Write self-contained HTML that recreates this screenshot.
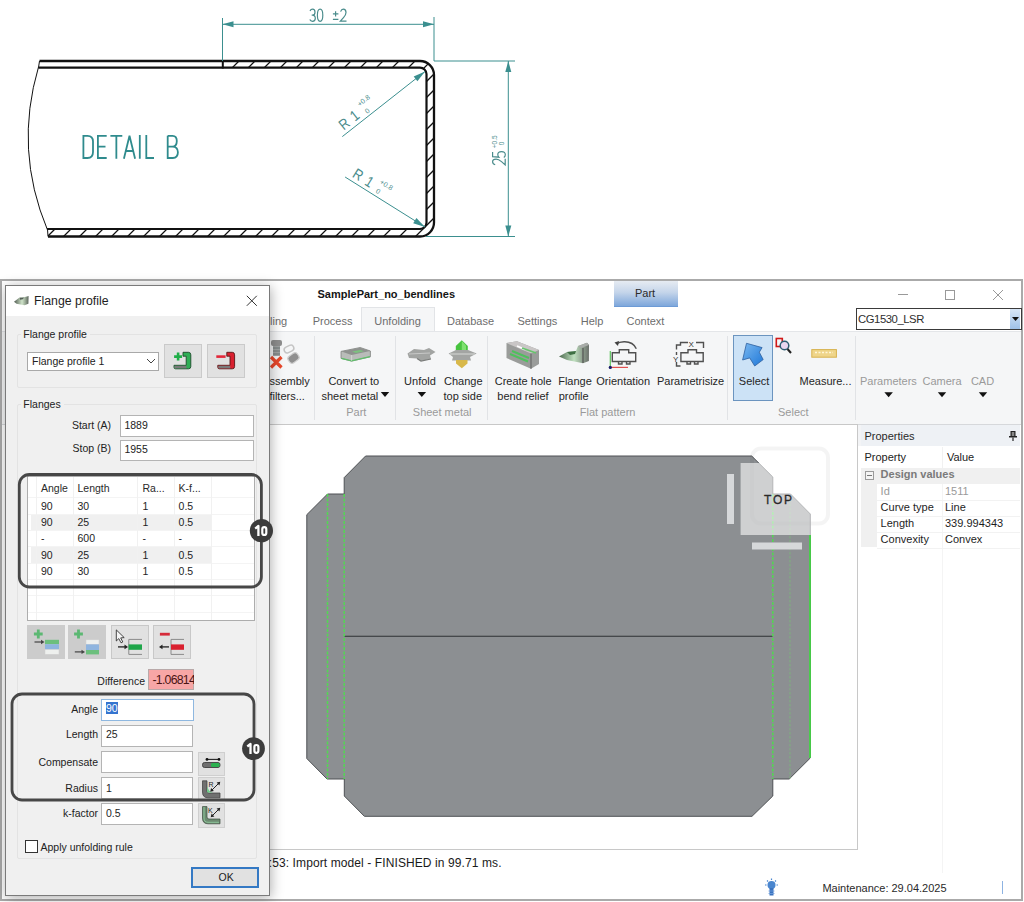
<!DOCTYPE html>
<html><head><meta charset="utf-8">
<style>
*{margin:0;padding:0;box-sizing:border-box}
html,body{width:1024px;height:902px;overflow:hidden;background:#fff;font-family:"Liberation Sans",sans-serif;color:#222}
.a{position:absolute}
.t{position:absolute;white-space:nowrap;line-height:1}
</style></head><body>

<!-- ============ TECH DRAWING ============ -->
<svg class="a" style="left:0;top:0" width="1024" height="270" viewBox="0 0 1024 270" id="draw">
<defs><clipPath id="hc"><path d="M222.5 61 H420 A14 14 0 0 1 434 75 V222 A14 14 0 0 1 420 236.5 H48 L47 229 H420 A6.5 6.5 0 0 0 426.5 222.5 V74 A6.5 6.5 0 0 0 420 67.6 H222.5 Z"/></clipPath></defs>
<g clip-path="url(#hc)"><path d="M-440 260 L-180 0 M-424 260 L-164 0 M-408 260 L-148 0 M-392 260 L-132 0 M-376 260 L-116 0 M-360 260 L-100 0 M-344 260 L-84 0 M-328 260 L-68 0 M-312 260 L-52 0 M-296 260 L-36 0 M-280 260 L-20 0 M-264 260 L-4 0 M-248 260 L12 0 M-232 260 L28 0 M-216 260 L44 0 M-200 260 L60 0 M-184 260 L76 0 M-168 260 L92 0 M-152 260 L108 0 M-136 260 L124 0 M-120 260 L140 0 M-104 260 L156 0 M-88 260 L172 0 M-72 260 L188 0 M-56 260 L204 0 M-40 260 L220 0 M-24 260 L236 0 M-8 260 L252 0 M8 260 L268 0 M24 260 L284 0 M40 260 L300 0 M56 260 L316 0 M72 260 L332 0 M88 260 L348 0 M104 260 L364 0 M120 260 L380 0 M136 260 L396 0 M152 260 L412 0 M168 260 L428 0 M184 260 L444 0 M200 260 L460 0 M216 260 L476 0 M232 260 L492 0 M248 260 L508 0 M264 260 L524 0 M280 260 L540 0 M296 260 L556 0 M312 260 L572 0 M328 260 L588 0 M344 260 L604 0 M360 260 L620 0 M376 260 L636 0 M392 260 L652 0 M408 260 L668 0 M424 260 L684 0 M440 260 L700 0 M456 260 L716 0 M472 260 L732 0 M488 260 L748 0 M504 260 L764 0 M520 260 L780 0 M536 260 L796 0 M552 260 L812 0 M568 260 L828 0 M584 260 L844 0 M600 260 L860 0 M616 260 L876 0 M632 260 L892 0 M648 260 L908 0 M664 260 L924 0 M680 260 L940 0 M696 260 L956 0 M712 260 L972 0 M728 260 L988 0 M744 260 L1004 0 M760 260 L1020 0 M776 260 L1036 0 M792 260 L1052 0 M808 260 L1068 0 M824 260 L1084 0 M840 260 L1100 0 M856 260 L1116 0 M872 260 L1132 0 M888 260 L1148 0 M904 260 L1164 0 M920 260 L1180 0 M936 260 L1196 0 M952 260 L1212 0 M968 260 L1228 0 M984 260 L1244 0" stroke="#111" stroke-width="1.3" fill="none"/></g>
<path d="M39.5 61 H420 A14 14 0 0 1 434 75 V222 A14 14 0 0 1 420 236.5 H48" stroke="#111" fill="none" stroke-width="2.3"/>
<path d="M38.5 67.6 H420 A6.5 6.5 0 0 1 426.5 74 V222.5 A6.5 6.5 0 0 1 420 229 H47" stroke="#111" fill="none" stroke-width="2.2"/>
<path d="M222.8 61 V68.5" stroke="#111" fill="none" stroke-width="2"/>
<path d="M38.5 67 Q14 150 47.5 230" stroke="#111" fill="none" stroke-width="1"/>
<path d="M39.5 61 L38.5 67.6 M47.5 229 L48 236.5" stroke="#111" fill="none" stroke-width="1"/>
<path d="M222.5 18 V61 M434 17 V61 M222.5 24.3 H434 M434 61 H515 M426 236.5 H515 M508.3 61 V236.5" stroke="#3b8f8f" stroke-width="1" fill="none"/>
<path d="M222.5 24.3 L233.5 21.3 L233.5 27.3 Z" fill="#3b8f8f"/>
<path d="M434.0 24.3 L423.0 27.3 L423.0 21.3 Z" fill="#3b8f8f"/>
<path d="M508.3 61.0 L511.3 72.0 L505.3 72.0 Z" fill="#3b8f8f"/>
<path d="M508.3 236.5 L505.3 225.5 L511.3 225.5 Z" fill="#3b8f8f"/>
<path d="M342.3 136.6 L425 71.5 M345.1 177 L425 227" stroke="#3b8f8f" stroke-width="1" fill="none"/>
<path d="M425.0 71.5 L417.4 81.3 L413.7 76.6 Z" fill="#3b8f8f"/>
<path d="M425.0 227.0 L413.2 223.2 L416.4 218.1 Z" fill="#3b8f8f"/>
<path d="M83.4 135.8 V158 H87.5 Q93 158 93 152 V141.5 Q93 135.8 87.5 135.8 Z M106.7 135.8 H97.9 V158 H106.7 M97.9 146.7 H105.5 M110.4 135.8 H122.3 M116.35 135.8 V158.8 M123.9 158.8 L129.5 135.8 L135.1 158.8 M125.7 151 H133.3 M139.8 135 V158.8 M146.3 135 V158 H154 M167.7 135.8 H172.6 Q176.8 135.8 176.8 141 Q176.8 146.6 172.4 146.6 H167.7 M172.4 146.6 Q177.9 146.6 177.9 152.3 Q177.9 158 172.8 158 H167.7 V135.8" stroke="#2f8b8d" stroke-width="1.8" fill="none" stroke-linejoin="miter"/>
<path d="M310 11 Q310.8 9.2 312.6 9.2 Q315 9.2 315 12.2 Q315 15.1 312.4 15.1 H311.7 M312.4 15.1 Q315.3 15.1 315.3 18.3 Q315.3 21.3 312.5 21.3 Q310.6 21.3 309.8 19.5 M320.1 9.2 Q322.8 9.2 322.8 15.25 Q322.8 21.3 320.1 21.3 Q317.4 21.3 317.4 15.25 Q317.4 9.2 320.1 9.2 Z M335.6 11.2 V16.6 M332.9 13.9 H338.4 M332.9 19.3 H338.4 M340.6 11.6 Q341.4 9.2 343.3 9.2 Q346 9.2 346 12.4 Q346 14.8 343.5 17.6 L340.3 21.2 H346.5" stroke="#4a8c8c" stroke-width="1.2" fill="none"/>
<g transform="translate(505.4,165.2) rotate(-90)"><path d="M0.5 -10.2 Q1.3 -12.8 3.4 -12.8 Q6.1 -12.8 6.1 -9.3 Q6.1 -6.8 3.6 -3.9 L0.3 -0.2 H6.5 M13.3 -12.8 H8.5 L8 -6.6 Q9.1 -7.6 10.6 -7.6 Q13.6 -7.6 13.6 -3.9 Q13.6 -0.1 10.4 -0.1 Q8.5 -0.1 7.7 -1.6" stroke="#4a8c8c" stroke-width="1.2" fill="none"/><text x="17" y="-8.5" font-size="6.5" fill="#4a8c8c" font-family="Liberation Sans">+0.5</text><text x="20" y="-1.2" font-size="6.5" fill="#4a8c8c" font-family="Liberation Sans">0</text></g>
<g transform="translate(343.7,130.8) rotate(-38.4)" fill="#4a8c8c" font-family="Liberation Sans"><g transform="scale(0.85,1)"><text x="0" y="0" font-size="15">R</text><text x="17" y="0" font-size="15">1</text></g><text x="27.5" y="-9" font-size="7">+0.8</text><text x="29" y="1.5" font-size="7">0</text></g>
<g transform="translate(351.6,176.6) rotate(32)" fill="#4a8c8c" font-family="Liberation Sans"><g transform="scale(0.85,1)"><text x="0" y="0" font-size="15">R</text><text x="17" y="0" font-size="15">1</text></g><text x="27" y="-9" font-size="7">+0.8</text><text x="28.3" y="0.8" font-size="7">0</text></g>
</svg>

<!-- ============ APP WINDOW ============ -->
<div class="a" id="app" style="left:0;top:279px;width:1023px;height:622px;border:2px solid #aaaaaa;background:#fff"></div>
<!-- title -->
<div class="t" style="left:317.5px;top:289px;font-size:11px;font-weight:bold;color:#151515">SamplePart_no_bendlines</div>
<div class="a" style="left:614px;top:281px;width:64px;height:26px;background:linear-gradient(#e6ebf2,#c5d5ea 45%,#7ea7db);border-bottom:1px solid #6d9bd6"></div>
<div class="t" style="left:635px;top:288px;font-size:11px;color:#2a2a2a">Part</div>
<!-- window controls -->
<div class="a" style="left:898px;top:294px;width:10px;height:1px;background:#999"></div>
<div class="a" style="left:945px;top:290px;width:10px;height:10px;border:1px solid #999"></div>
<svg class="a" style="left:992px;top:289px" width="12" height="12"><path d="M1 1 L11 11 M11 1 L1 11" stroke="#999" stroke-width="1"/></svg>
<!-- combo -->
<div class="a" style="left:856px;top:308px;width:165.5px;height:21.5px;border:1px solid #3a3a3a;background:#fff"></div>
<div class="t" style="left:858px;top:313.5px;font-size:11.3px;color:#2e2e2e;letter-spacing:-0.45px">CG1530_LSR</div>
<div class="a" style="left:1009.5px;top:309px;width:10.5px;height:19.5px;background:linear-gradient(#d8e6f6,#9fc1e8)"></div>
<svg class="a" style="left:1012px;top:317px" width="7" height="5"><path d="M0 0 H7 L3.5 4 Z" fill="#111"/></svg>
<!-- tabs -->
<div class="a" style="left:361px;top:307px;width:74px;height:25px;background:#f5f6f7;border:1px solid #e2e4e7;border-bottom:none"></div>
<div class="t" style="left:270px;top:316px;font-size:11px;color:#6d6d6d">ling</div>
<div class="t" style="left:312.7px;top:316px;font-size:11px;color:#6d6d6d">Process</div>
<div class="t" style="left:374.3px;top:316px;font-size:11px;color:#6d6d6d">Unfolding</div>
<div class="t" style="left:447px;top:316px;font-size:11px;color:#6d6d6d">Database</div>
<div class="t" style="left:517.5px;top:316px;font-size:11px;color:#6d6d6d">Settings</div>
<div class="t" style="left:580.8px;top:316px;font-size:11px;color:#6d6d6d">Help</div>
<div class="t" style="left:626.5px;top:316px;font-size:11px;color:#6d6d6d">Context</div>
<!-- ribbon -->
<div class="a" style="left:2px;top:331px;width:1019px;height:94px;background:#f5f6f7;border-top:1px solid #e4e6e9;border-bottom:1px solid #d6d8db"></div>
<div class="a" style="left:314px;top:336px;width:1px;height:84px;background:#e1e3e6"></div>
<div class="a" style="left:395px;top:336px;width:1px;height:84px;background:#e1e3e6"></div>
<div class="a" style="left:487px;top:336px;width:1px;height:84px;background:#e1e3e6"></div>
<div class="a" style="left:727px;top:336px;width:1px;height:84px;background:#e1e3e6"></div>
<div class="a" style="left:855px;top:336px;width:1px;height:84px;background:#e1e3e6"></div>
<div class="a" style="left:732.7px;top:335.3px;width:40.2px;height:66.2px;background:#cce2f6;border:1px solid #6b94bf"></div>
<div class="t" style="left:269.4px;top:375.9px;font-size:11px;color:#262626;">ssembly</div>
<div class="t" style="left:269.4px;top:391.1px;font-size:11px;color:#262626;">filters...</div>
<div class="t" style="left:328.4px;top:375.9px;font-size:11px;color:#262626;">Convert to</div>
<div class="t" style="left:321.4px;top:391.1px;font-size:11px;color:#262626;">sheet metal</div>
<div class="t" style="left:346.2px;top:407.0px;font-size:11px;color:#9a9a9a;">Part</div>
<div class="t" style="left:404.1px;top:375.9px;font-size:11px;color:#262626;">Unfold</div>
<div class="t" style="left:444.0px;top:375.9px;font-size:11px;color:#262626;">Change</div>
<div class="t" style="left:443.5px;top:391.1px;font-size:11px;color:#262626;">top side</div>
<div class="t" style="left:412.8px;top:407.0px;font-size:11px;color:#9a9a9a;">Sheet metal</div>
<div class="t" style="left:494.7px;top:375.9px;font-size:11px;color:#262626;">Create hole</div>
<div class="t" style="left:497.3px;top:391.1px;font-size:11px;color:#262626;">bend relief</div>
<div class="t" style="left:558.2px;top:375.9px;font-size:11px;color:#262626;">Flange</div>
<div class="t" style="left:558.7px;top:391.1px;font-size:11px;color:#262626;">profile</div>
<div class="t" style="left:596.3px;top:375.9px;font-size:11px;color:#262626;">Orientation</div>
<div class="t" style="left:657.0px;top:375.9px;font-size:11px;color:#262626;">Parametrisize</div>
<div class="t" style="left:579.8px;top:407.0px;font-size:11px;color:#9a9a9a;">Flat pattern</div>
<div class="t" style="left:738.8px;top:375.9px;font-size:11px;color:#262626;">Select</div>
<div class="t" style="left:799.5px;top:375.9px;font-size:11px;color:#262626;">Measure...</div>
<div class="t" style="left:778.0px;top:407.0px;font-size:11px;color:#9a9a9a;">Select</div>
<div class="t" style="left:860.0px;top:375.9px;font-size:11px;color:#9a9a9a;">Parameters</div>
<div class="t" style="left:922.5px;top:375.9px;font-size:11px;color:#9a9a9a;">Camera</div>
<div class="t" style="left:970.9px;top:375.9px;font-size:11px;color:#9a9a9a;">CAD</div>
<svg class="a" style="left:260px;top:332px" width="764" height="92" viewBox="260 332 764 92"><defs><linearGradient id="gtray" x1="0" y1="0" x2="0" y2="1"><stop offset="0" stop-color="#c9cbc9"/><stop offset="0.5" stop-color="#9a9d9a"/><stop offset="1" stop-color="#7b7e7b"/></linearGradient><linearGradient id="gsel" x1="0" y1="0" x2="1" y2="1"><stop offset="0" stop-color="#7ab8f0"/><stop offset="1" stop-color="#1f78d8"/></linearGradient><linearGradient id="gfl" x1="0" y1="0" x2="1" y2="0"><stop offset="0" stop-color="#4c6a4e"/><stop offset="0.5" stop-color="#bfe0bf"/><stop offset="1" stop-color="#6b706b"/></linearGradient></defs><path d="M380.8 391.9 H389.2 L385.0 396.9 Z" fill="#111"/><path d="M417.6 391.9 H426.1 L421.8 396.9 Z" fill="#111"/><path d="M884.4 392.3 H892.9 L888.6 397.3 Z" fill="#111"/><path d="M937.8 392.3 H946.2 L942.0 397.3 Z" fill="#111"/><path d="M978.8 392.3 H987.2 L983.0 397.3 Z" fill="#111"/><rect x="271" y="340" width="11" height="6" rx="2" fill="#8e8e8e"/><rect x="273" y="346" width="7" height="10" fill="#9fa3a3"/><path d="M273 348 H280 M273 351 H280 M273 354 H280" stroke="#6e7777" stroke-width="1"/><path d="M271 357 L281.5 367.5 M281.5 357 L271 367.5" stroke="#e8472a" stroke-width="3.2"/><rect x="284" y="346" width="10" height="6" rx="3" fill="none" stroke="#c4c4c4" stroke-width="1.5" transform="rotate(-25 289 349)"/><rect x="288" y="354" width="11" height="8" rx="3" fill="#8f8f8f" stroke="#d0d0d0" stroke-width="1.2" transform="rotate(-35 293.5 358)"/><path d="M341 351.4 L360.2 347.5 L370.4 351 V356.8 L351.6 361.1 L341 358.4 Z" fill="#b9bcb9" stroke="#7d807d" stroke-width="0.8" stroke-linejoin="round"/><path d="M341.5 351.6 L360.2 347.8 L370 351.1 L351.6 355 Z" fill="#8f928f"/><path d="M352 351.5 L360 350 L364 351.3 L356 353 Z" fill="#7cc27f"/><path d="M341.5 358.3 L351.6 360.8 L370 356.6" stroke="#5fbf6a" stroke-width="1.2" fill="none"/><path d="M351.6 355 V360.8" stroke="#d9dcd9" stroke-width="0.8"/><path d="M407.5 353.5 L414 349 L424 350 L429 348 L435.5 352 L430 355.5 L431 359 L421 361 L417 358.5 L409 358 Z" fill="#a2a4a2"/><path d="M409 354 L430 353" stroke="#c7c8c7" stroke-width="1.2"/><path d="M417 358.5 L421 361 L431 359" stroke="#7a7c7a" stroke-width="1.2" fill="none"/><path d="M461.8 340.2 L467.8 346 V352.5 H455.8 V346 Z" fill="#47c43f"/><path d="M461.8 341 L466 345.5 V351 H461.8 Z" fill="#7ee070"/><path d="M448.6 353.5 L456 350 L468 350 L476.7 353.5 L470 357 L471 360.4 L452 360.4 L453 357 Z" fill="#a3a5a3"/><path d="M450 354 H475" stroke="#cfd0cf" stroke-width="1.2"/><path d="M456 360 H467.5 V363.5 L461.8 368.3 L456 363.5 Z" fill="#d8b84a"/><path d="M506.5 343 L517 341.3 L539 350 V364 L531 368.7 L506.5 358 Z" fill="#9a9c9a"/><path d="M506.5 343 L517 341.3 L539 350 L531 353.5 Z" fill="#c9c6c6"/><path d="M531 353.5 V368.7" stroke="#6b6b6b" stroke-width="1.2"/><path d="M512 351 L529 358 M510 354 L528 361.5" stroke="#4fc05d" stroke-width="2"/><path d="M517 346 L525 349.5" stroke="#fff" stroke-width="1.8"/><path d="M522 348 L536 353" stroke="#66c46c" stroke-width="1.8"/><path d="M559 356.5 L567 352 L576 351 L578 346 L587 342.8 L589 345 L588.9 361 L583 363.3 L567 360 Z" fill="url(#gfl)"/><path d="M578 346 L587 342.8 L589 345 L581 348 Z" fill="#a9aca9"/><path d="M567 352 L576 351 L575 354 L570 355 Z" fill="#3f6f44"/><path d="M583 348 V363" stroke="#5e625e" stroke-width="1.5"/><g fill="none" stroke="#505050" stroke-width="1.4"><path d="M612.3 352.8 H619.3 V349.8 H628.7 V352.8 H635.7 V361.5 H612.3 Z"/><path d="M618.5 361.5 V364 H622 V361.5 M626.5 361.5 V364 H630 V361.5"/><path d="M636.3 348.7 Q633 341.5 624 341.8 Q619 342 616.5 344"/></g><path d="M614.5 342.5 L619 341 L618 346 Z" fill="#404040"/><path d="M610.3 351 V367.4" stroke="#5cc45c" stroke-width="1.2"/><path d="M610.3 367.4 H628" stroke="#e05050" stroke-width="1.2"/><circle cx="610.3" cy="367.4" r="1.6" fill="#1a1a6a"/><g fill="none" stroke="#505050" stroke-width="1.4"><path d="M680.9 352.8 H688 V349.8 H696.5 V352.8 H703.2 V361.5 H680.9 Z"/><path d="M687 361.5 V364 H690.5 V361.5 M694.5 361.5 V364 H698 V361.5"/><path d="M676.5 349.5 V345 H680.5 V342.5 H688 M696 342.5 H703.5 V348"/><path d="M676.5 352 V355 M676.5 362 V366 H680.5"/></g><text x="688.5" y="347" font-size="8" fill="#333" font-family="Liberation Sans">X</text><text x="673" y="361.5" font-size="8" fill="#333" font-family="Liberation Sans">Y</text><path d="M746.5 343.3 L762.1 347.6 L759.3 352.2 L763.2 359.6 L754.7 366 L749.7 357.9 L742.6 360 Z" fill="url(#gsel)" stroke="#2f5f9e" stroke-width="0.8" stroke-linejoin="round"/><rect x="776.3" y="338.5" width="6" height="8" fill="none" stroke="#d01818" stroke-width="1.6"/><circle cx="784.5" cy="345.5" r="4.3" fill="#e8d6f0" stroke="#2c5d72" stroke-width="1.5"/><path d="M787.5 349 L791 353" stroke="#222" stroke-width="2"/><rect x="811.8" y="349.6" width="24.6" height="7.6" fill="#efd58a" stroke="#d7b24e" stroke-width="1"/><path d="M815 352.5 H833" stroke="#fff6d8" stroke-width="1.4" stroke-dasharray="2 1.5"/></svg>
<!-- viewport -->
<div class="a" style="left:262px;top:424px;width:596px;height:426px;background:#fff;border:1px solid #c8c8c8"></div>
<svg class="a" style="left:263px;top:425px" width="594" height="424" viewBox="263 425 594 424">
<polygon points="365.6,456 751.7,456 772.8,477 772.8,494 790.5,494 810.3,514 810.3,758 789.2,779 772.8,779 772.8,796 752,816.3 364.4,816.3 344.3,796 344.3,779 327,779 306.8,758.5 306.8,514.7 327.5,494 344.2,494 344.2,477.6" fill="#8c8f92" stroke="#4e5154" stroke-width="1"/>
<path d="M344.3 636.3 H772.8" stroke="#2e3033" stroke-width="1.1"/>
<path d="M327.5 494 V779 M344.2 494 V779 M772.8 494 V779" stroke="#52d852" stroke-width="1.5" stroke-dasharray="3 1.5"/>
<path d="M790 500 V779" stroke="#7fb07f" stroke-width="1" stroke-dasharray="2.5 1.5"/>
<path d="M810 535 V758" stroke="#3ee03e" stroke-width="1.6"/>
<rect x="752" y="448.5" width="76" height="75" rx="9" fill="none" stroke="#000" stroke-opacity="0.045" stroke-width="4"/>
<rect x="740.6" y="463" width="70.4" height="72" fill="#ffffff" opacity="0.58"/>
<rect x="727" y="474" width="7" height="50" fill="#d6d8da"/>
<rect x="752" y="542.5" width="50" height="7" fill="#d6d8da"/>
<text x="764" y="503.5" font-size="12" fill="#2a2a2a" font-family="Liberation Sans" letter-spacing="1.8" stroke="#2a2a2a" stroke-width="0.3">TOP</text>
</svg>
<!-- properties -->
<div class="a" style="left:858px;top:425px;width:3px;height:21px;background:#f3f4f6"></div>
<div class="a" style="left:861.0px;top:425.0px;width:160.0px;height:448.0px;background:#fff"></div>
<div class="a" style="left:861.0px;top:425.0px;width:159.0px;height:21.3px;background:#eef1f5"></div>
<div class="t" style="left:864.4px;top:430.7px;font-size:11px;color:#2a2a2a;">Properties</div>
<svg class="a" style="left:1008px;top:430px" width="10" height="12"><path d="M2.5 1 H7.5 V6 H9 V7.5 H1 V6 H2.5 Z" fill="#222"/><path d="M5 7.5 V11" stroke="#222" stroke-width="1.2"/><path d="M3.7 2 H6.3 V6 H3.7 Z" fill="#888"/></svg>
<div class="t" style="left:864.4px;top:452.3px;font-size:11px;color:#222;">Property</div>
<div class="t" style="left:946.9px;top:452.3px;font-size:11px;color:#222;">Value</div>
<div class="a" style="left:942.0px;top:446.5px;width:1.0px;height:21.0px;background:#f1f1f1"></div>
<div class="a" style="left:861.0px;top:467.6px;width:159.0px;height:16.1px;background:#f0f0f0"></div>
<div class="a" style="left:861.0px;top:483.7px;width:16.2px;height:63.8px;background:#f0f0f0"></div>
<div class="a" style="left:942.0px;top:483.7px;width:1.0px;height:389.3px;background:#f4f4f4"></div>
<div class="a" style="left:877.2px;top:499.7px;width:142.8px;height:1.0px;background:#f2f2f2"></div>
<div class="a" style="left:877.2px;top:515.7px;width:142.8px;height:1.0px;background:#f2f2f2"></div>
<div class="a" style="left:877.2px;top:531.6px;width:142.8px;height:1.0px;background:#f2f2f2"></div>
<div class="a" style="left:877.2px;top:547.5px;width:142.8px;height:1.0px;background:#f2f2f2"></div>
<div class="a" style="left:865.0px;top:471.0px;width:9.0px;height:9.0px;border:1px solid #9a9a9a;background:#f4f4f4"></div>
<div class="a" style="left:867.0px;top:475.0px;width:5.0px;height:1.0px;background:#777"></div>
<div class="t" style="left:880.6px;top:469.2px;font-size:11px;color:#7a7a7a;font-weight:bold">Design values</div>
<div class="t" style="left:880.6px;top:485.5px;font-size:11px;color:#9a9a9a;">Id</div>
<div class="t" style="left:945.0px;top:485.5px;font-size:11px;color:#9a9a9a;">1511</div>
<div class="t" style="left:880.6px;top:501.7px;font-size:11px;color:#1e1e1e;">Curve type</div>
<div class="t" style="left:945.0px;top:501.7px;font-size:11px;color:#1e1e1e;">Line</div>
<div class="t" style="left:880.6px;top:517.7px;font-size:11px;color:#1e1e1e;">Length</div>
<div class="t" style="left:945.0px;top:517.7px;font-size:11px;color:#1e1e1e;">339.994343</div>
<div class="t" style="left:880.6px;top:533.9px;font-size:11px;color:#1e1e1e;">Convexity</div>
<div class="t" style="left:945.0px;top:533.9px;font-size:11px;color:#1e1e1e;">Convex</div>
<!-- status -->
<div class="t" style="left:262px;top:857px;font-size:12px;color:#1a1a1a;letter-spacing:0.1px">0:53: Import model - FINISHED in 99.71 ms.</div>
<div class="t" style="left:822.4px;top:883px;font-size:11px;color:#2a2a2a">Maintenance: 29.04.2025</div>
<div class="a" style="left:1002px;top:881px;width:1px;height:13px;background:#8db3e2"></div>
<svg class="a" style="left:762px;top:878px" width="20" height="20" viewBox="762 878 20 20"><circle cx="771.5" cy="885" r="4" fill="#4a86cf"/><path d="M771.5 880 V878.5 M766.5 885 H765 M776.5 885 H778 M768 881.5 L767 880.5 M775 881.5 L776 880.5" stroke="#4a86cf" stroke-width="1.2"/><rect x="769.5" y="888" width="4" height="7.5" fill="#3a72bf"/><path d="M768.5 891 H774.5 M768.5 893.5 H774.5" stroke="#6fa0dd" stroke-width="0.8"/></svg>

<!-- ============ DIALOG ============ -->
<div class="a" id="dlg" style="left:5px;top:285px;width:265px;height:611px;background:#f0f0f0;border:1px solid #7a7a7a;box-shadow:1px 2px 12px rgba(0,0,0,0.32)"><div class="a" style="left:0;top:0;width:263px;height:30px;background:#fff"></div></div>
<svg class="a" style="left:0;top:0" width="40" height="320" viewBox="0 0 40 320"><defs><linearGradient id="gi" x1="0" y1="0" x2="1" y2="0"><stop offset="0" stop-color="#4f5a50"/><stop offset="0.55" stop-color="#cfe3c9"/><stop offset="0.75" stop-color="#9fb09b"/><stop offset="1" stop-color="#5d665d"/></linearGradient></defs><path d="M14 301.8 L19.5 297.6 L24 297.2 L28.6 296 L28.4 303.8 L24.5 305.2 L16.5 303.8 Z" fill="url(#gi)"/><path d="M19.8 297.8 L24 297.4 L22.8 299.3 L20 299.8 Z" fill="#56605a"/></svg>
<div class="t" style="left:34.0px;top:295px;font-size:12.3px;color:#1e1e1e;">Flange profile</div>
<svg class="a" style="left:246px;top:295px" width="12" height="12"><path d="M0.8 0.8 L10.8 10.8 M10.8 0.8 L0.8 10.8" stroke="#333" stroke-width="1"/></svg>
<div class="a" style="left:17.0px;top:334.0px;width:240.0px;height:54.0px;border:1px solid #e3e3e3;border-radius:2px"></div>
<div class="a" style="left:21.0px;top:330.0px;width:69.0px;height:8.0px;background:#f0f0f0"></div>
<div class="t" style="left:23.3px;top:329.1px;font-size:10.5px;color:#222;">Flange profile</div>
<div class="a" style="left:27.0px;top:351.5px;width:132.0px;height:19.0px;background:#fff;border:1px solid #a9a9a9"></div>
<div class="t" style="left:32.0px;top:356.1px;font-size:10.5px;color:#222;">Flange profile 1</div>
<svg class="a" style="left:146px;top:358px" width="10" height="6"><path d="M1 1 L5 5 L9 1" stroke="#444" stroke-width="1" fill="none"/></svg>
<div class="a" style="left:164.4px;top:344.0px;width:37.6px;height:34.0px;background:#e1e1e1;border:1px solid #cacaca"></div>
<div class="a" style="left:207.2px;top:344.0px;width:37.8px;height:34.0px;background:#e1e1e1;border:1px solid #cacaca"></div>
<svg class="a" style="left:160px;top:340px" width="90" height="40" viewBox="160 340 90 40"><path d="M183.0 352.3 H188.5 Q190.8 352.3 190.8 354.8 V366.5 Q190.8 368.8 188.5 368.8 H175.5 Q174.0 368.8 174.0 367.3 V365.3 H186.2 V356.2 H183.0 Z" fill="#2fae55" stroke="#1d4a2a" stroke-width="0.9" stroke-linejoin="round"/><path d="M174.5 365.8 H186.4 V368.3 H174.5 Z" fill="#7a7a7a"/><path d="M178.1 352.6 V360.6 M174.1 356.6 H182.1" stroke="#1fae48" stroke-width="2.6"/><path d="M226.8 352.3 H232.3 Q234.6 352.3 234.6 354.8 V366.5 Q234.6 368.8 232.3 368.8 H219.3 Q217.8 368.8 217.8 367.3 V365.3 H230.0 V356.2 H226.8 Z" fill="#d9202f" stroke="#5a1616" stroke-width="0.9" stroke-linejoin="round"/><path d="M218.3 365.8 H230.2 V368.3 H218.3 Z" fill="#7a7a7a"/><path d="M216.3 356.6 H225.6" stroke="#e3283a" stroke-width="2.6"/></svg>
<div class="a" style="left:17.0px;top:404.0px;width:240.0px;height:455.0px;border:1px solid #e3e3e3;border-radius:2px"></div>
<div class="a" style="left:21.0px;top:400.0px;width:43.0px;height:8.0px;background:#f0f0f0"></div>
<div class="t" style="left:23.3px;top:398.8px;font-size:10.5px;color:#222;">Flanges</div>
<div class="t" style="right:913.0px;top:419.8px;font-size:10.5px;color:#222;">Start (A)</div>
<div class="a" style="left:119.5px;top:415.0px;width:134.0px;height:21.5px;background:#fff;border:1px solid #b4b4b4"></div>
<div class="t" style="left:124.4px;top:419.7px;font-size:10.5px;color:#222;">1889</div>
<div class="t" style="right:913.0px;top:443.1px;font-size:10.5px;color:#222;">Stop (B)</div>
<div class="a" style="left:119.5px;top:439.5px;width:134.0px;height:21.5px;background:#fff;border:1px solid #b4b4b4"></div>
<div class="t" style="left:124.4px;top:443.8px;font-size:10.5px;color:#222;">1955</div>
<div class="a" style="left:26.5px;top:476.0px;width:228.0px;height:144.5px;background:#fff;border:1px solid #adadad"></div>
<div class="a" style="left:31.0px;top:513.5px;width:179.7px;height:16.5px;background:#f0f0f0"></div>
<div class="a" style="left:31.0px;top:546.3px;width:179.7px;height:16.3px;background:#f0f0f0"></div>
<div class="a" style="left:27.5px;top:497.0px;width:226.0px;height:1.0px;background:#f4f4f4"></div>
<div class="a" style="left:27.5px;top:513.5px;width:226.0px;height:1.0px;background:#f4f4f4"></div>
<div class="a" style="left:27.5px;top:530.0px;width:226.0px;height:1.0px;background:#f4f4f4"></div>
<div class="a" style="left:27.5px;top:546.3px;width:226.0px;height:1.0px;background:#f4f4f4"></div>
<div class="a" style="left:27.5px;top:562.6px;width:226.0px;height:1.0px;background:#f4f4f4"></div>
<div class="a" style="left:27.5px;top:579.0px;width:226.0px;height:1.0px;background:#f4f4f4"></div>
<div class="a" style="left:27.5px;top:595.3px;width:226.0px;height:1.0px;background:#f4f4f4"></div>
<div class="a" style="left:27.5px;top:611.6px;width:226.0px;height:1.0px;background:#f4f4f4"></div>
<div class="a" style="left:35.6px;top:477.0px;width:1.0px;height:143.0px;background:#f1f1f1"></div>
<div class="a" style="left:72.9px;top:477.0px;width:1.0px;height:143.0px;background:#f1f1f1"></div>
<div class="a" style="left:137.3px;top:477.0px;width:1.0px;height:143.0px;background:#f1f1f1"></div>
<div class="a" style="left:174.0px;top:477.0px;width:1.0px;height:143.0px;background:#f1f1f1"></div>
<div class="a" style="left:210.7px;top:477.0px;width:1.0px;height:143.0px;background:#f1f1f1"></div>
<div class="t" style="left:41.0px;top:482.9px;font-size:10.5px;color:#2a2a2a;">Angle</div><div class="t" style="left:77.5px;top:482.9px;font-size:10.5px;color:#2a2a2a;">Length</div><div class="t" style="left:142.5px;top:482.9px;font-size:10.5px;color:#2a2a2a;">Ra...</div><div class="t" style="left:178.6px;top:482.9px;font-size:10.5px;color:#2a2a2a;">K-f...</div>
<div class="t" style="left:41.0px;top:500.8px;font-size:10.5px;color:#1e1e1e;">90</div><div class="t" style="left:77.5px;top:500.8px;font-size:10.5px;color:#1e1e1e;">30</div><div class="t" style="left:142.5px;top:500.8px;font-size:10.5px;color:#1e1e1e;">1</div><div class="t" style="left:178.6px;top:500.8px;font-size:10.5px;color:#1e1e1e;">0.5</div>
<div class="t" style="left:41.0px;top:517.1px;font-size:10.5px;color:#1e1e1e;">90</div><div class="t" style="left:77.5px;top:517.1px;font-size:10.5px;color:#1e1e1e;">25</div><div class="t" style="left:142.5px;top:517.1px;font-size:10.5px;color:#1e1e1e;">1</div><div class="t" style="left:178.6px;top:517.1px;font-size:10.5px;color:#1e1e1e;">0.5</div>
<div class="t" style="left:41.0px;top:533.3px;font-size:10.5px;color:#1e1e1e;">-</div><div class="t" style="left:77.5px;top:533.3px;font-size:10.5px;color:#1e1e1e;">600</div><div class="t" style="left:142.5px;top:533.3px;font-size:10.5px;color:#1e1e1e;">-</div><div class="t" style="left:178.6px;top:533.3px;font-size:10.5px;color:#1e1e1e;">-</div>
<div class="t" style="left:41.0px;top:549.7px;font-size:10.5px;color:#1e1e1e;">90</div><div class="t" style="left:77.5px;top:549.7px;font-size:10.5px;color:#1e1e1e;">25</div><div class="t" style="left:142.5px;top:549.7px;font-size:10.5px;color:#1e1e1e;">1</div><div class="t" style="left:178.6px;top:549.7px;font-size:10.5px;color:#1e1e1e;">0.5</div>
<div class="t" style="left:41.0px;top:566.1px;font-size:10.5px;color:#1e1e1e;">90</div><div class="t" style="left:77.5px;top:566.1px;font-size:10.5px;color:#1e1e1e;">30</div><div class="t" style="left:142.5px;top:566.1px;font-size:10.5px;color:#1e1e1e;">1</div><div class="t" style="left:178.6px;top:566.1px;font-size:10.5px;color:#1e1e1e;">0.5</div>
<div class="a" style="left:27.3px;top:625.0px;width:37.5px;height:33.5px;background:#cccccc"></div>
<div class="a" style="left:68.0px;top:625.0px;width:37.8px;height:33.5px;background:#cccccc"></div>
<div class="a" style="left:110.7px;top:625.0px;width:38.1px;height:33.5px;background:#e1e1e1;border:1px solid #c8c8c8"></div>
<div class="a" style="left:152.7px;top:625.0px;width:38.1px;height:33.5px;background:#e1e1e1;border:1px solid #c8c8c8"></div>
<svg class="a" style="left:20px;top:620px" width="180" height="45" viewBox="20 620 180 45"><path d="M38.3 629.6 V638.4 M33.9 634 H42.7" stroke="#5cb873" stroke-width="2.8"/><path d="M34.5 642 H42" stroke="#444" stroke-width="1.2"/><path d="M44.5 642 L41 639.8 V644.2 Z" fill="#444"/><rect x="45" y="639.8" width="14" height="4.4" fill="#6cbf7d"/><rect x="45" y="644.2" width="14" height="5.3" fill="#8fb5df"/><rect x="45" y="649.5" width="14" height="4.8" fill="#eef0ee" stroke="#cfcfcf" stroke-width="0.5"/><path d="M78.5 629.6 V638.4 M74.1 634 H82.9" stroke="#5cb873" stroke-width="2.8"/><rect x="86" y="639.8" width="13" height="4.6" fill="#eef0ee" stroke="#cfcfcf" stroke-width="0.5"/><rect x="86" y="644.4" width="13" height="5.6" fill="#8fb5df"/><rect x="86" y="650" width="13" height="4.4" fill="#6cbf7d"/><path d="M74.8 651.9 H82.5" stroke="#444" stroke-width="1.2"/><path d="M85 651.9 L81.5 649.7 V654.1 Z" fill="#444"/><path d="M116.3 629.9 V641 L118.8 638.6 L121 642.8 L122.8 642 L120.7 637.9 L124.2 637.6 Z" fill="#f4f4f4" stroke="#333" stroke-width="0.9" stroke-linejoin="round"/><path d="M118 646.9 H125.5" stroke="#222" stroke-width="1.3"/><path d="M128 646.9 L124.5 644.6 V649.2 Z" fill="#222"/><path d="M142 639.4 H128.8 V654.4 H142" stroke="#8a8a8a" stroke-width="1" fill="none"/><rect x="128.6" y="644.4" width="13.4" height="5.4" fill="#1fa64a"/><path d="M159.9 634.2 H169.8" stroke="#d62b3a" stroke-width="2.8"/><path d="M161.5 646.9 H169" stroke="#222" stroke-width="1.3"/><path d="M159 646.9 L162.5 644.6 V649.2 Z" fill="#222"/><path d="M184 639.4 H171 V654.4 H184" stroke="#8a8a8a" stroke-width="1" fill="none"/><rect x="171" y="644.4" width="13" height="5.4" fill="#d9202f"/></svg>
<div class="t" style="right:879px;top:675.6px;font-size:10.5px;color:#222;">Difference</div>
<div class="a" style="left:148.4px;top:669.4px;width:46px;height:20.6px;background:#f7a6a6;border:1px solid #b9a9a9"></div>
<div class="a" style="left:149.5px;top:670px;width:44px;height:19px;overflow:hidden"><div class="t" style="left:3px;top:4.2px;font-size:12.3px;color:#4a1414;letter-spacing:-0.75px">-1.06814</div></div>
<div class="t" style="right:926.0px;top:703.6px;font-size:10.5px;color:#222;">Angle</div>
<div class="a" style="left:101.2px;top:699.3px;width:93.3px;height:21.7px;background:#fff;border:1px solid #8fb8e0"></div>
<div class="t" style="right:926.0px;top:729.1px;font-size:10.5px;color:#222;">Length</div>
<div class="a" style="left:101.2px;top:725.4px;width:92.1px;height:21.2px;background:#fff;border:1px solid #b4b4b4"></div>
<div class="t" style="right:926.0px;top:756.6px;font-size:10.5px;color:#222;">Compensate</div>
<div class="a" style="left:101.2px;top:751.3px;width:92.1px;height:21.3px;background:#fff;border:1px solid #b4b4b4"></div>
<div class="t" style="right:926.0px;top:782.6px;font-size:10.5px;color:#222;">Radius</div>
<div class="a" style="left:101.2px;top:777.0px;width:92.1px;height:21.6px;background:#fff;border:1px solid #b4b4b4"></div>
<div class="t" style="right:926.0px;top:808.4px;font-size:10.5px;color:#222;">k-factor</div>
<div class="a" style="left:101.2px;top:803.0px;width:92.1px;height:21.7px;background:#fff;border:1px solid #b4b4b4"></div>
<div class="a" style="left:105.5px;top:701.8px;width:12.3px;height:12.4px;background:#3574cf"></div>
<div class="t" style="left:106.0px;top:703.4px;font-size:10.5px;color:#fff;">90</div>
<div class="t" style="left:106.0px;top:729.1px;font-size:10.5px;color:#1e1e1e;">25</div>
<div class="t" style="left:106.0px;top:782.6px;font-size:10.5px;color:#1e1e1e;">1</div>
<div class="t" style="left:106.0px;top:808.3px;font-size:10.5px;color:#1e1e1e;">0.5</div>
<div class="a" style="left:198.2px;top:751.5px;width:26.6px;height:24.2px;background:#e1e1e1;border:1px solid #cfcfcf"></div>
<div class="a" style="left:198.2px;top:777.3px;width:26.6px;height:24.2px;background:#e1e1e1;border:1px solid #cfcfcf"></div>
<div class="a" style="left:198.2px;top:803.0px;width:26.6px;height:25.0px;background:#e1e1e1;border:1px solid #cfcfcf"></div>
<svg class="a" style="left:195px;top:745px" width="35" height="90" viewBox="195 745 35 90"><path d="M207 759.4 H219" stroke="#222" stroke-width="1.1"/><circle cx="207" cy="759.4" r="1.4" fill="#111"/><circle cx="219" cy="759.4" r="1.4" fill="#111"/><rect x="202.5" y="762.5" width="17.5" height="5" rx="2" fill="#6f6f6f" stroke="#333" stroke-width="0.8"/><rect x="211" y="763" width="8.6" height="4" rx="1.5" fill="#2bb14f"/><path d="M202.5 780.8 H207 V791 Q207 793 209 793 H220 V797.8 H208 Q202.5 797.8 202.5 792 Z" fill="#707070" stroke="#3a3a3a" stroke-width="0.7"/><path d="M207.2 786 Q208 791.5 213 792.6 H207.2 Z" fill="#6fd08a"/><text x="208.5" y="787" font-size="7" fill="#222" font-family="Liberation Sans">R</text><path d="M211 791 L219.5 782.5" stroke="#222" stroke-width="1"/><path d="M220.3 781.7 L216.6 782.6 L219.4 785.4 Z M210.2 791.8 L211.1 788.1 L213.9 790.9 Z" fill="#222"/><path d="M202.5 806.6 H207 V817 Q207 819 209 819 H220 V823.8 H208 Q202.5 823.8 202.5 818 Z" fill="#6c8a70" stroke="#3a4a3c" stroke-width="0.7"/><path d="M204 807 V818 Q204 822.3 208 822.3 H219" stroke="#8cc49a" stroke-width="1" fill="none"/><text x="208" y="813" font-size="7" fill="#222" font-family="Liberation Sans">K</text><path d="M211.5 816.5 L219.5 808.5" stroke="#222" stroke-width="1"/><path d="M220.3 807.7 L216.6 808.6 L219.4 811.4 Z M210.7 817.3 L211.6 813.6 L214.4 816.4 Z" fill="#222"/></svg>
<div class="a" style="left:24.6px;top:840.0px;width:13.2px;height:12.8px;background:#fff;border:1px solid #333"></div>
<div class="t" style="left:40.5px;top:841.7px;font-size:10.5px;color:#222;">Apply unfolding rule</div>
<div class="a" style="left:190.6px;top:867.0px;width:68.6px;height:20.5px;background:#e1e1e1;border:2px solid #3479c4"></div>
<div class="t" style="left:218.5px;top:872.1px;font-size:10.5px;color:#222;">OK</div>
<svg class="a" style="left:0;top:460px" width="280" height="360" viewBox="0 460 280 360"><rect x="19.3" y="474.5" width="242.1" height="112.5" rx="10" fill="none" stroke="#474747" stroke-width="2.8"/><rect x="12" y="694" width="242" height="106" rx="10" fill="none" stroke="#474747" stroke-width="2.8"/><circle cx="261.4" cy="530.7" r="11.6" fill="#3c3c3c"/><circle cx="253.5" cy="748.6" r="11.4" fill="#3c3c3c"/><path d="M255.2 528.6 L258.4 526 V536" stroke="#fff" stroke-width="2.3" fill="none" stroke-linejoin="round"/><rect x="262.3" y="527.1" width="4" height="7.8" rx="2" stroke="#fff" stroke-width="2.2" fill="none"/><g transform="translate(-7.9 217.9)"><path d="M255.2 528.6 L258.4 526 V536" stroke="#fff" stroke-width="2.3" fill="none" stroke-linejoin="round"/><rect x="262.3" y="527.1" width="4" height="7.8" rx="2" stroke="#fff" stroke-width="2.2" fill="none"/></g></svg>
</body></html>
